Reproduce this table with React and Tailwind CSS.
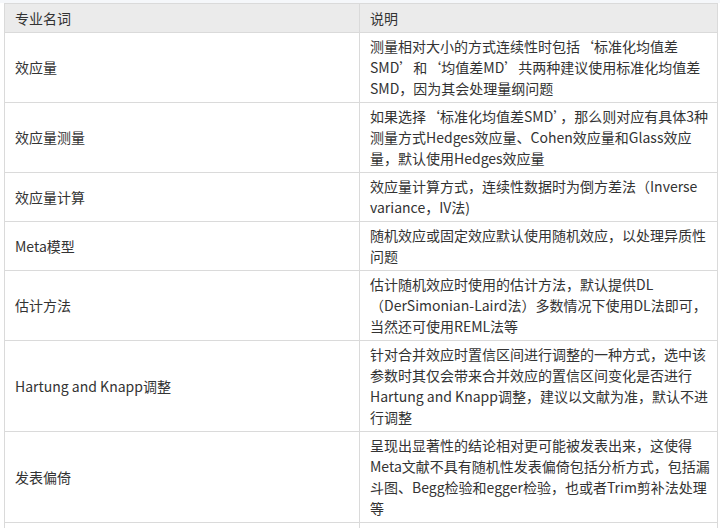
import React from "react";

const rows = [
  {
    name: "效应量",
    lines: [
      "测量相对大小的方式连续性时包括‘标准化均值差",
      "SMD’和‘均值差MD’共两种建议使用标准化均值差",
      "SMD，因为其会处理量纲问题",
    ],
  },
  {
    name: "效应量测量",
    lines: [
      "如果选择‘标准化均值差SMD’，那么则对应有具体3种",
      "测量方式Hedges效应量、Cohen效应量和Glass效应",
      "量，默认使用Hedges效应量",
    ],
  },
  {
    name: "效应量计算",
    lines: ["效应量计算方式，连续性数据时为倒方差法（Inverse", "variance，IV法)"],
  },
  {
    name: "Meta模型",
    lines: ["随机效应或固定效应默认使用随机效应，以处理异质性", "问题"],
  },
  {
    name: "估计方法",
    lines: [
      "估计随机效应时使用的估计方法，默认提供DL",
      "（DerSimonian-Laird法）多数情况下使用DL法即可，",
      "当然还可使用REML法等",
    ],
  },
  {
    name: "Hartung and Knapp调整",
    lines: [
      "针对合并效应时置信区间进行调整的一种方式，选中该",
      "参数时其仅会带来合并效应的置信区间变化是否进行",
      "Hartung and Knapp调整，建议以文献为准，默认不进",
      "行调整",
    ],
  },
  {
    name: "发表偏倚",
    lines: [
      "呈现出显著性的结论相对更可能被发表出来，这使得",
      "Meta文献不具有随机性发表偏倚包括分析方式，包括漏",
      "斗图、Begg检验和egger检验，也或者Trim剪补法处理",
      "等",
    ],
  },
];

function Line({ text }) {
  if (!text.startsWith("测")) return <div className="whitespace-nowrap">{text}</div>;
  return (
    <div className="whitespace-nowrap">
      <span style={{ fontFamily: '"Noto Sans CJK JP", "Noto Sans CJK SC", sans-serif' }}>测</span>
      {text.slice(1)}
    </div>
  );
}

export default function App() {
  return (
    <div
      lang="zh-CN"
      className="w-[720px] h-[528px] overflow-hidden bg-white text-[14px] text-[#333333]"
      style={{ fontFamily: '"Noto Sans CJK SC", "Noto Sans", sans-serif' }}
    >
      <div className="h-[3px] bg-[#f5f7fa]" />
      <table className="ml-[4px] w-[713px] border-collapse table-fixed">
        <colgroup>
          <col className="w-[355px]" />
          <col className="w-[358px]" />
        </colgroup>
        <thead>
          <tr className="bg-[#ebebeb]">
            <th className="h-[29px] border border-[#dadada] px-[10px] text-left font-normal leading-[22px]">
              专业名词
            </th>
            <th className="h-[29px] border border-[#dadada] px-[10px] text-left font-normal leading-[22px]">
              说明
            </th>
          </tr>
        </thead>
        <tbody>
          {rows.map((r) => (
            <tr key={r.name}>
              <td className="border border-[#dadada] px-[10px] align-middle leading-[21px]">
                {r.name}
              </td>
              <td className="border border-[#dadada] pl-[10px] pr-[4px] py-[3px] leading-[21px]">
                {r.lines.map((l, i) => (
                  <Line key={i} text={l} />
                ))}
              </td>
            </tr>
          ))}
          <tr>
            <td className="h-[40px] border border-[#dadada]" />
            <td className="h-[40px] border border-[#dadada]" />
          </tr>
        </tbody>
      </table>
    </div>
  );
}
